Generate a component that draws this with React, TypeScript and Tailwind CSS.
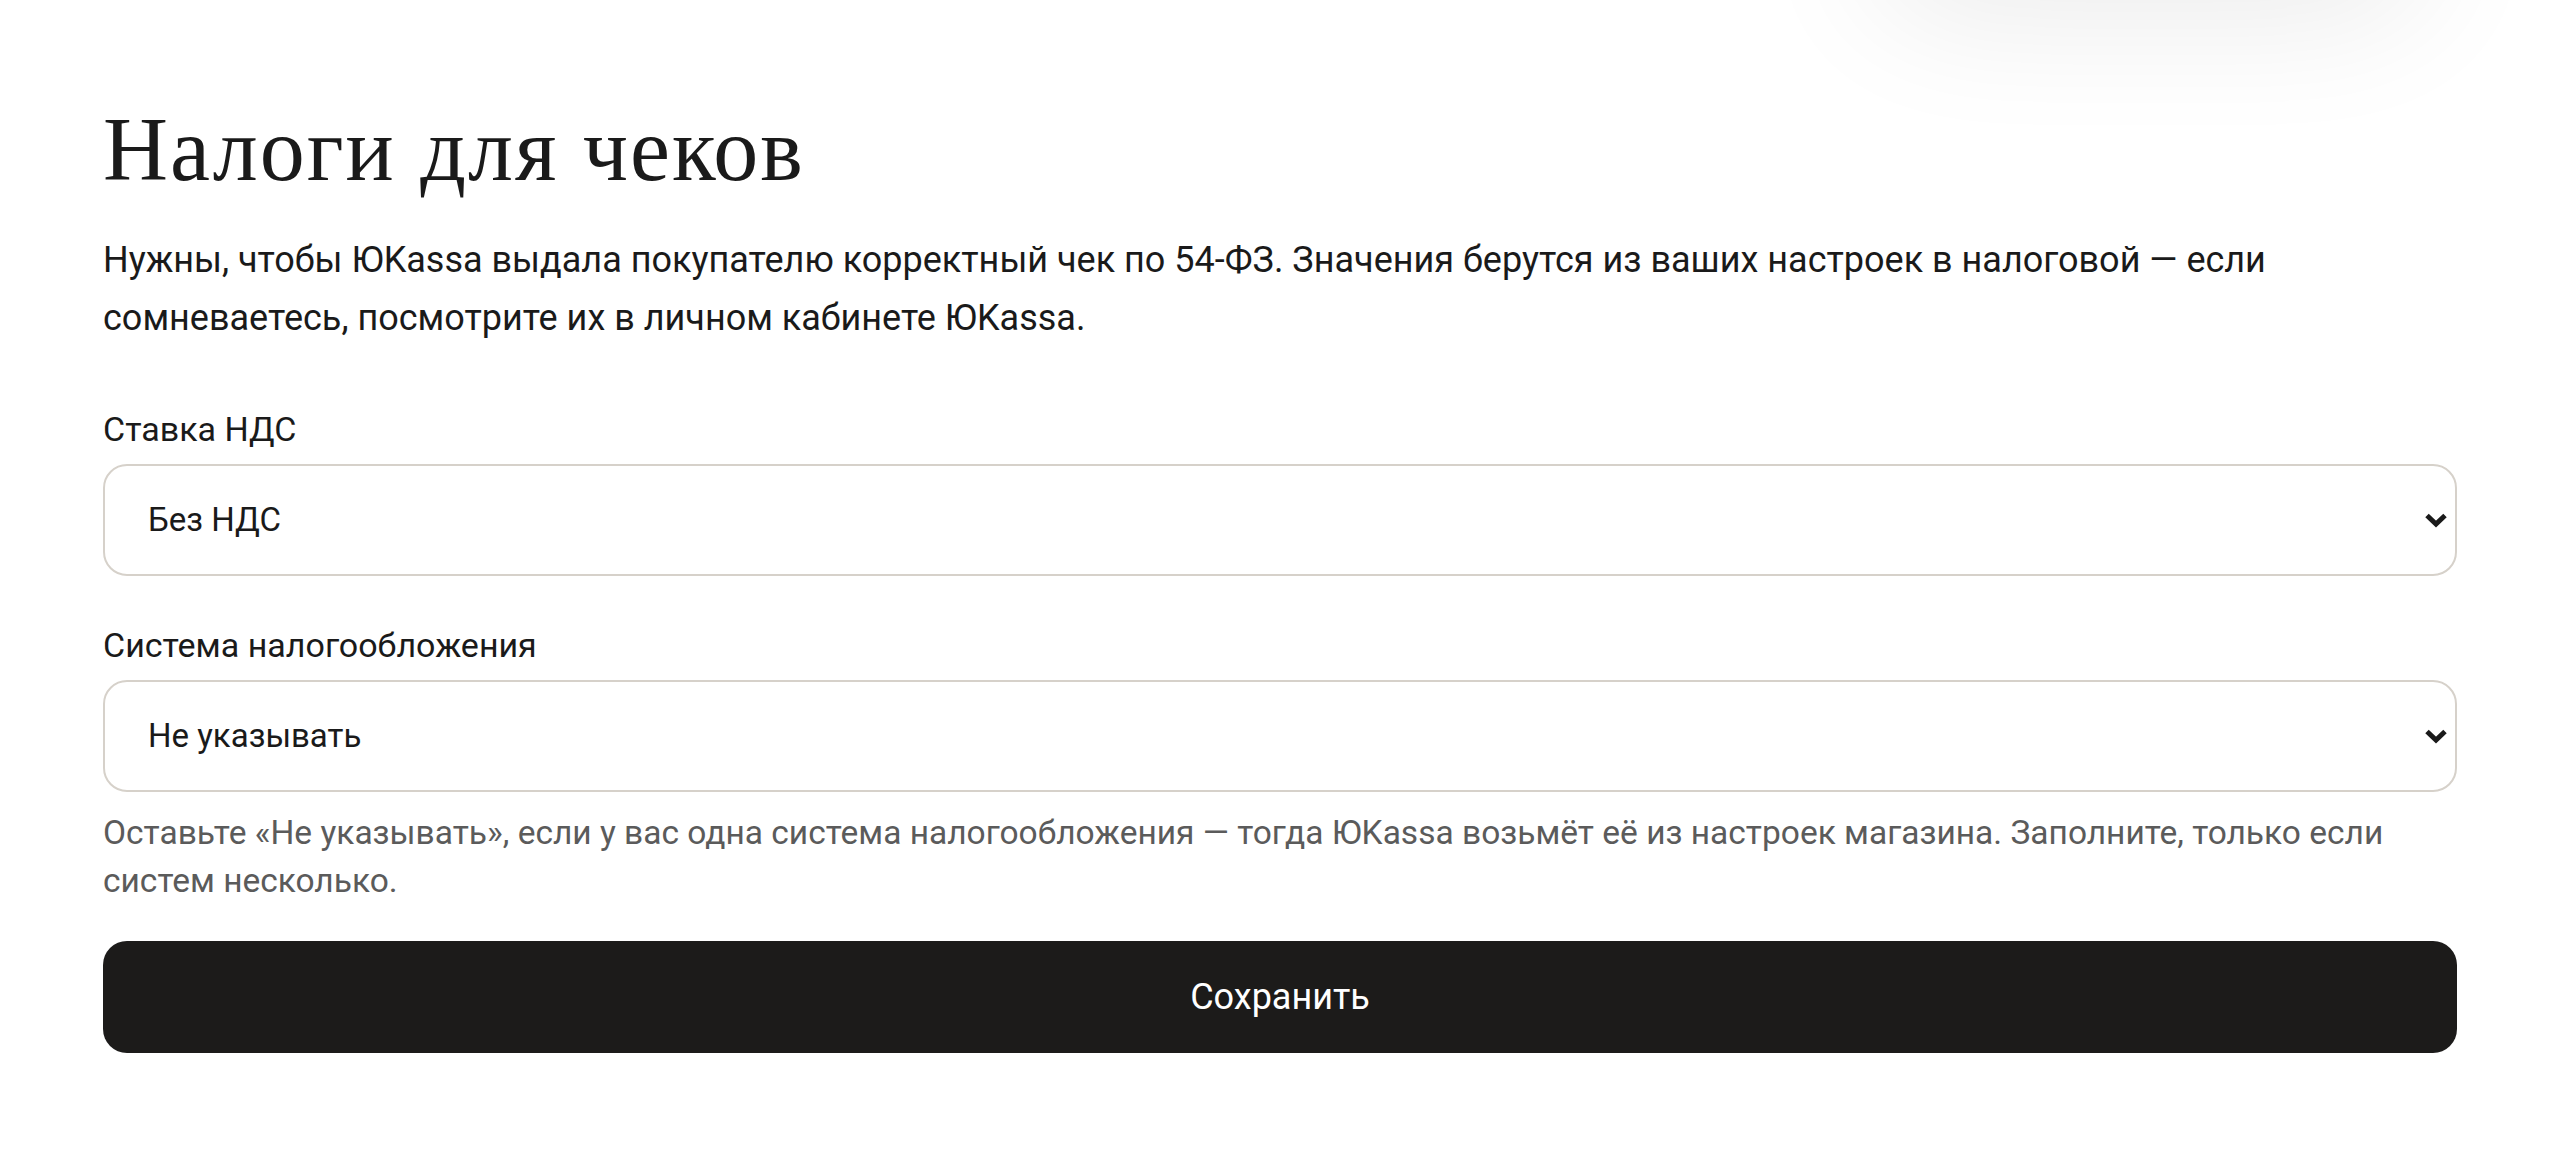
import React, { useState } from "react";

const vatOptions = ["Без НДС", "НДС 0%", "НДС 10%", "НДС 20%"];
const taxSystems = [
  "Не указывать",
  "ОСН",
  "УСН доходы",
  "УСН доходы минус расходы",
  "ЕСХН",
  "Патент",
];

const sans = "font-['Roboto','Open_Sans',sans-serif]";

function Chevron() {
  return (
    <svg
      className="pointer-events-none absolute right-[9px] top-1/2 -translate-y-1/2"
      width="24"
      height="16"
      viewBox="0 0 24 16"
      fill="none"
    >
      <path d="M3 3.5 L12 12 L21 3.5" stroke="#1a1a1a" strokeWidth="5" />
    </svg>
  );
}

function Field({
  label,
  value,
  options,
  onChange,
}: {
  label: string;
  value: string;
  options: string[];
  onChange: (v: string) => void;
}) {
  return (
    <label className="block">
      <span className="mb-[7px] mt-[2px] block text-[34px] leading-[56px] text-[#1a1a1a]">{label}</span>
      <span className="relative block">
        <select
          value={value}
          onChange={(e) => onChange(e.target.value)}
          className={`${sans} block h-[112px] w-full appearance-none rounded-[24px] border-2 border-[#d6d1ca] bg-white pl-[43px] pr-[60px] text-[33px] text-[#1a1a1a] outline-none`}
        >
          {options.map((o) => (
            <option key={o}>{o}</option>
          ))}
        </select>
        <Chevron />
      </span>
    </label>
  );
}

export default function App() {
  const [vat, setVat] = useState(vatOptions[0]);
  const [system, setSystem] = useState(taxSystems[0]);

  return (
    <div className={`${sans} relative min-h-[1158px] overflow-hidden bg-white`}>
      {/* тень от всплывающего элемента за верхним краем */}
      <div className="pointer-events-none absolute left-[1880px] top-[-220px] h-[220px] w-[540px] rounded-[60px] bg-white shadow-[0_10px_140px_rgba(0,0,0,0.09)]" />

      <div className="px-[103px] pt-[97px]">
        <h1 className="font-['Liberation_Serif','Times_New_Roman',serif] text-[90px] font-normal leading-[106px] tracking-[2px] text-[#1a1a1a]">
          Налоги для чеков
        </h1>
        <p className="mt-[28px] text-[36px] leading-[58px] text-[#1a1a1a]">
          Нужны, чтобы ЮKassa выдала покупателю корректный чек по 54-ФЗ. Значения берутся из ваших
          настроек в налоговой — если сомневаетесь, посмотрите их в личном кабинете ЮKassa.
        </p>

        <form className="mt-[54px]" onSubmit={(e) => e.preventDefault()}>
          <Field label="Ставка НДС" value={vat} options={vatOptions} onChange={setVat} />
          <div className="mt-[41px]">
            <Field
              label="Система налогообложения"
              value={system}
              options={taxSystems}
              onChange={setSystem}
            />
          </div>
          <p className="mt-[17px] text-[33.5px] leading-[48px] text-[#5b5b5b]">
            Оставьте «Не указывать», если у вас одна система налогообложения — тогда ЮKassa возьмёт её
            из настроек магазина. Заполните, только если систем несколько.
          </p>
          <button
            type="submit"
            className="mt-[36px] flex h-[112px] w-full items-center justify-center rounded-[24px] bg-[#1c1b1a] text-[36px] text-white"
          >
            Сохранить
          </button>
        </form>
      </div>
    </div>
  );
}
